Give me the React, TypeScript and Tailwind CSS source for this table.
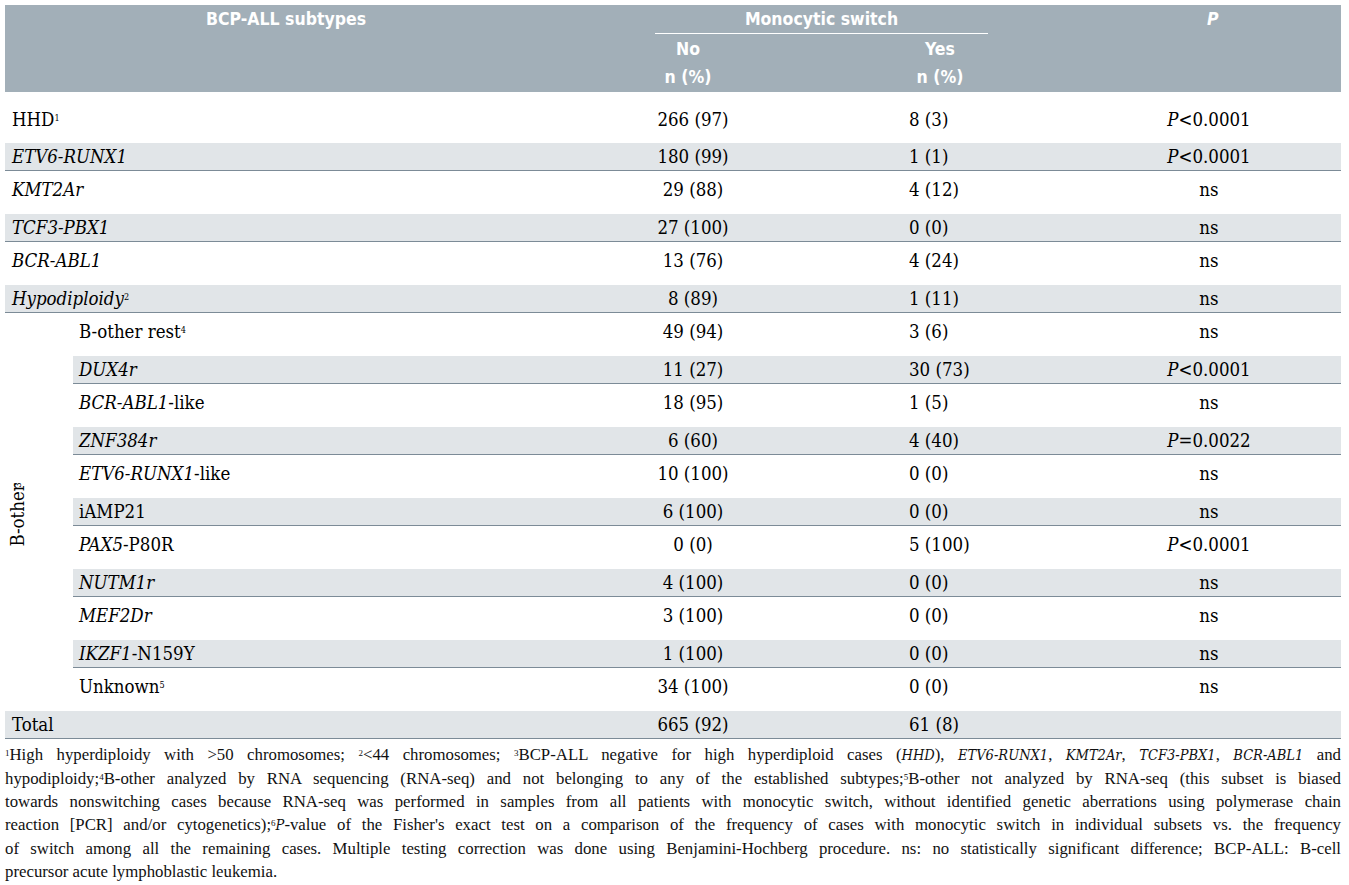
import React from 'react';
import clsx from 'clsx';

interface Row {
  label: React.ReactNode;
  no: string;
  yes: string;
  p: React.ReactNode;
}

// condensed serif, close to the journal's table face
const body = "font-['DejaVu_Serif_Condensed','DejaVu_Serif',serif] [font-stretch:condensed]";

const sig = (op: string, v: string) => (
  <>
    <i>P</i>
    {op}
    {v}
  </>
);

const topRows: Row[] = [
  { label: <>HHD<sup className="text-[9px]">1</sup></>, no: '266 (97)', yes: '8 (3)', p: sig('<', '0.0001') },
  { label: <i>ETV6-RUNX1</i>, no: '180 (99)', yes: '1 (1)', p: sig('<', '0.0001') },
  { label: <i>KMT2Ar</i>, no: '29 (88)', yes: '4 (12)', p: 'ns' },
  { label: <i>TCF3-PBX1</i>, no: '27 (100)', yes: '0 (0)', p: 'ns' },
  { label: <i>BCR-ABL1</i>, no: '13 (76)', yes: '4 (24)', p: 'ns' },
  { label: <><i>Hypodiploidy</i><sup className="text-[9px]">2</sup></>, no: '8 (89)', yes: '1 (11)', p: 'ns' },
];

const otherRows: Row[] = [
  { label: <>B-other rest<sup className="text-[9px]">4</sup></>, no: '49 (94)', yes: '3 (6)', p: 'ns' },
  { label: <i>DUX4r</i>, no: '11 (27)', yes: '30 (73)', p: sig('<', '0.0001') },
  { label: <><i>BCR-ABL1</i>-like</>, no: '18 (95)', yes: '1 (5)', p: 'ns' },
  { label: <i>ZNF384r</i>, no: '6 (60)', yes: '4 (40)', p: sig('=', '0.0022') },
  { label: <><i>ETV6-RUNX1</i>-like</>, no: '10 (100)', yes: '0 (0)', p: 'ns' },
  { label: 'iAMP21', no: '6 (100)', yes: '0 (0)', p: 'ns' },
  { label: <><i>PAX5</i>-P80R</>, no: '0 (0)', yes: '5 (100)', p: sig('<', '0.0001') },
  { label: <i>NUTM1r</i>, no: '4 (100)', yes: '0 (0)', p: 'ns' },
  { label: <i>MEF2Dr</i>, no: '3 (100)', yes: '0 (0)', p: 'ns' },
  { label: <><i>IKZF1</i>-N159Y</>, no: '1 (100)', yes: '0 (0)', p: 'ns' },
  { label: <>Unknown<sup className="text-[9px]">5</sup></>, no: '34 (100)', yes: '0 (0)', p: 'ns' },
];

function DataRow({ row, gray, first, sub }: { row: Row; gray: boolean; first?: boolean; sub?: boolean }) {
  return (
    <div
      className={clsx(
        'flex items-center',
        gray && 'h-[28px] bg-[#e1e5e8] border-b border-[#7c8b97]',
        !gray && first && 'h-[51px] pt-[9px] pb-[5px]',
        !gray && !first && 'h-[43px] pb-[6px]'
      )}
    >
      <div className={clsx(sub ? 'w-[582px] pl-[6px]' : 'w-[650px] pl-[7px]')}>{row.label}</div>
      <div className="w-[76px] text-center">{row.no}</div>
      <div className="w-[178px]" />
      <div className="w-[168px]">{row.yes}</div>
      <div className="w-[264px] text-center">{row.p}</div>
    </div>
  );
}

const sup = (n: string) => <sup className="text-[9px]">{n}</sup>;
const it = (t: string) => (
  <i className="font-['DejaVu_Serif_Condensed','DejaVu_Serif',serif] [font-stretch:condensed] text-[14.5px]">{t}</i>
);

export default function App() {
  return (
    <div className="min-h-screen bg-white p-[5px] text-black font-['Liberation_Serif','Times_New_Roman',serif]">
      <div className="w-[1336px]">
        {/* header */}
        <div className="h-[87px] bg-[#a2afb8] text-white font-bold text-[17.5px] font-['DejaVu_Sans_Condensed','DejaVu_Sans',sans-serif] [font-stretch:condensed] flex">
          <div className="w-[650px] h-[29px] flex items-center pl-[201px]">BCP-ALL subtypes</div>
          <div className="w-[333px] flex flex-col">
            <div className="h-[29px] flex items-center justify-center border-b border-white">Monocytic switch</div>
            <div className="flex pt-[1px] leading-[28px]">
              <div className="w-[66px] text-center">
                <div>No</div>
                <div>n (%)</div>
              </div>
              <div className="w-[70px] ml-[184px] text-center">
                <div>Yes</div>
                <div>n (%)</div>
              </div>
            </div>
          </div>
          <div className="flex-1 h-[29px] flex items-center pl-[219px] italic">P</div>
        </div>

        {/* body */}
        <div className={clsx('text-[18.5px]', body)}>
          {topRows.map((r, i) => (
            <DataRow key={i} row={r} gray={i % 2 === 1} first={i === 0} />
          ))}
          <div className="flex">
            <div className="w-[68px] flex items-center pl-[3px]">
              <div className="[writing-mode:vertical-rl] rotate-180 leading-[20px]">
                B-other<sup className="text-[9px]">3</sup>
              </div>
            </div>
            <div className="flex-1">
              {otherRows.map((r, i) => (
                <DataRow key={i} row={r} gray={i % 2 === 1} sub />
              ))}
            </div>
          </div>
          <DataRow row={{ label: 'Total', no: '665 (92)', yes: '61 (8)', p: '' }} gray />
        </div>

        {/* footnotes */}
        <div className="pt-[4px] text-[16.8px] leading-[23px] text-[#111]">
          <div className="text-justify [text-align-last:justify]">
            {sup('1')}High hyperdiploidy with &gt;50 chromosomes; {sup('2')}&lt;44 chromosomes; {sup('3')}BCP-ALL negative for high hyperdiploid cases ({it('HHD')}), {it('ETV6-RUNX1')}, {it('KMT2Ar')}, {it('TCF3-PBX1')}, {it('BCR-ABL1')} and
          </div>
          <div className="text-justify [text-align-last:justify]">
            hypodiploidy;{sup('4')}B-other analyzed by RNA sequencing (RNA-seq) and not belonging to any of the established subtypes;{sup('5')}B-other not analyzed by RNA-seq (this subset is biased
          </div>
          <div className="text-justify [text-align-last:justify]">
            towards nonswitching cases because RNA-seq was performed in samples from all patients with monocytic switch, without identified genetic aberrations using polymerase chain
          </div>
          <div className="text-justify [text-align-last:justify]">
            reaction [PCR] and/or cytogenetics);{sup('6')}{it('P')}-value of the Fisher's exact test on a comparison of the frequency of cases with monocytic switch in individual subsets vs. the frequency
          </div>
          <div className="text-justify [text-align-last:justify]">
            of switch among all the remaining cases. Multiple testing correction was done using Benjamini-Hochberg procedure. ns: no statistically significant difference; BCP-ALL: B-cell
          </div>
          <div>precursor acute lymphoblastic leukemia.</div>
        </div>
      </div>
    </div>
  );
}
